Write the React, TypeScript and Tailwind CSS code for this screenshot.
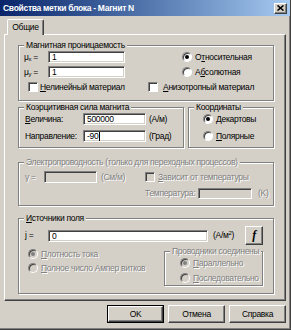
import React from "react";

const font = { fontFamily: '"Liberation Sans", Arial, sans-serif' };

const sunken =
  "border border-t-[#808080] border-l-[#808080] border-b-white border-r-white shadow-[inset_1px_1px_0_#404040,inset_-1px_-1px_0_#D4D0C8]";
const raised =
  "border border-t-white border-l-white border-b-[#404040] border-r-[#404040] shadow-[inset_-1px_-1px_0_#808080]";
const dis = "text-[#808080] [text-shadow:1px_1px_0_#fff]";

function U({ children }: { children: React.ReactNode }) {
  return <span className="underline decoration-1 underline-offset-[1px]">{children}</span>;
}

function Group({
  label,
  disabled,
  className,
  children,
}: {
  label: React.ReactNode;
  disabled?: boolean;
  className: string;
  children?: React.ReactNode;
}) {
  return (
    <div
      className={`relative border border-[#808080] shadow-[inset_1px_1px_0_#fff,1px_1px_0_#fff] ${className}`}
    >
      <span
        className={`absolute -top-[6px] left-[5px] bg-[#D4D0C8] px-[2px] leading-[11px] whitespace-nowrap ${
          disabled ? dis : ""
        }`}
      >
        {label}
      </span>
      {children}
    </div>
  );
}

function Radio({ checked, disabled }: { checked?: boolean; disabled?: boolean }) {
  return (
    <div
      className={`w-[10px] h-[10px] shrink-0 rounded-full border border-t-[#808080] border-l-[#808080] border-b-white border-r-white shadow-[inset_1px_1px_0_#404040] flex items-center justify-center ${
        disabled ? "bg-[#D4D0C8]" : "bg-white"
      }`}
    >
      {checked && (
        <div className={`w-[4px] h-[4px] rounded-full ${disabled ? "bg-[#808080]" : "bg-black"}`} />
      )}
    </div>
  );
}

function Check({ disabled }: { disabled?: boolean }) {
  return (
    <div
      className={`w-[10px] h-[10px] shrink-0 border border-t-[#808080] border-l-[#808080] border-b-white border-r-white shadow-[inset_1px_1px_0_#404040] ${
        disabled ? "bg-[#D4D0C8]" : "bg-white"
      }`}
    />
  );
}

function Field({
  w,
  h,
  children,
  disabled,
}: {
  w: string;
  h: string;
  children?: React.ReactNode;
  disabled?: boolean;
}) {
  return (
    <div
      className={`${w} ${h} ${sunken} ${disabled ? "bg-[#D4D0C8]" : "bg-white"} shrink-0 flex items-center pl-[3px] leading-[10px]`}
    >
      {children}
    </div>
  );
}

function Btn({ children, def }: { children: React.ReactNode; def?: boolean }) {
  return (
    <div
      className={`w-[57px] h-[18px] flex items-center justify-center ${
        def ? "border border-black" : ""
      }`}
    >
      <div className={`w-full h-full ${raised} flex items-center justify-center`}>{children}</div>
    </div>
  );
}

export default function App() {
  return (
    <div
      style={font}
      className="w-[291px] h-[330px] bg-[#D4D0C8] text-[8.5px] tracking-[-0.3px] leading-[11px] text-black flex flex-col border-r border-b border-r-[#404040] border-b-[#404040] shadow-[inset_-1px_-1px_0_#808080] overflow-hidden"
    >
      {/* Title bar */}
      <div className="h-[16px] shrink-0 flex items-center justify-between pl-[3px] pr-[3px] bg-linear-to-r from-[#0A246A] to-[#A6CAF0]">
        <span className="text-white font-bold text-[8.5px] whitespace-nowrap">
          Свойства метки блока - Магнит N
        </span>
        <div className={`w-[13px] h-[11px] bg-[#D4D0C8] ${raised} flex items-center justify-center`}>
          <svg width="7" height="6" viewBox="0 0 7 6">
            <path d="M0.5 0.5 L6.5 5.5 M6.5 0.5 L0.5 5.5" stroke="#000" strokeWidth="1.6" />
          </svg>
        </div>
      </div>

      {/* Tab row */}
      <div className="pl-[7px] mt-[3px] flex relative z-10">
        <div className="w-[37px] h-[16px] -mb-[1px] bg-[#D4D0C8] border-t border-l border-t-white border-l-white border-r border-r-[#404040] shadow-[inset_-1px_0_0_#808080] rounded-t-[2px] flex items-center justify-center pb-[1px]">
          Общие
        </div>
      </div>

      {/* Panel */}
      <div
        className={`ml-[4px] w-[282px] h-[267px] shrink-0 ${raised} pl-[13px] pt-[10px] flex flex-col`}
      >
        {/* Group 1 */}
        <Group label="Магнитная проницаемость" className="w-[256px] h-[56px] shrink-0">
          <div className="pl-[5px] pt-[5px] flex flex-col">
            <div className="flex items-center h-[12px]">
              <span className="w-[24px]">
                μ<sub className="text-[6px]">x</sub> =
              </span>
              <Field w="w-[77px]" h="h-[12px]">1</Field>
              <div className="ml-[57px] flex items-center">
                <Radio checked />
                <span className="ml-[3px]">
                  О<U>т</U>носительная
                </span>
              </div>
            </div>
            <div className="flex items-center h-[12px] mt-[3px]">
              <span className="w-[24px]">
                μ<sub className="text-[6px]">y</sub> =
              </span>
              <Field w="w-[77px]" h="h-[12px]">1</Field>
              <div className="ml-[57px] flex items-center">
                <Radio />
                <span className="ml-[3px]">
                  А<U>б</U>солютная
                </span>
              </div>
            </div>
            <div className="flex items-center h-[10px] mt-[4px]">
              <div className="w-[124px] flex items-center pl-[4px]">
                <Check />
                <span className="ml-[2px]">
                  <U>Н</U>елинейный материал
                </span>
              </div>
              <Check />
              <span className="ml-[5px]">
                <U>А</U>низотропный материал
              </span>
            </div>
          </div>
        </Group>

        {/* Row 2 */}
        <div className="flex mt-[6px] gap-[4px]">
          <Group label="Коэрцитивная сила магнита" className="w-[166px] h-[41px]">
            <div className="pl-[6px] pt-[5px] flex flex-col">
              <div className="flex items-center h-[12px]">
                <span className="w-[58px]">
                  <U>В</U>еличина:
                </span>
                <Field w="w-[63px]" h="h-[12px]">500000</Field>
                <span className="ml-[3px]">(А/м)</span>
              </div>
              <div className="flex items-center h-[12px] mt-[5px]">
                <span className="w-[58px]">
                  Направление:
                </span>
                <Field w="w-[63px]" h="h-[12px]">
                  -90
                  <span className="inline-block w-[1px] h-[9px] bg-black ml-[1px]" />
                </Field>
                <span className="ml-[3px]">(Град)</span>
              </div>
            </div>
          </Group>
          <Group label="Координаты" className="w-[86px] h-[41px]">
            <div className="pl-[14px] pt-[6px] flex flex-col">
              <div className="flex items-center h-[10px]">
                <Radio checked />
                <span className="ml-[3px]">
                  <U>Д</U>екартовы
                </span>
              </div>
              <div className="flex items-center h-[10px] mt-[7px]">
                <Radio />
                <span className="ml-[3px]">
                  <U>П</U>олярные
                </span>
              </div>
            </div>
          </Group>
        </div>

        {/* Group 3 */}
        <Group
          label="Электропроводность (только для переходных процессов)"
          disabled
          className="w-[256px] h-[44px] shrink-0 mt-[14px]"
        >
          <div className={`pl-[6px] pt-[8px] flex flex-col ${dis}`}>
            <div className="flex items-center h-[12px]">
              <div className="w-[120px] flex items-center">
                <span className="w-[19px]">γ =</span>
                <Field w="w-[53px]" h="h-[12px]" disabled />
                <span className="ml-[4px]">(См/м)</span>
              </div>
              <Check disabled />
              <span className="ml-[3px]">
                <U>З</U>ависит от температуры
              </span>
            </div>
            <div className="flex items-center h-[11px] mt-[5px]">
              <span className="ml-[120px] w-[50px] text-right whitespace-nowrap">Температура:</span>
              <div className="ml-[3px]">
                <Field w="w-[54px]" h="h-[11px]" disabled />
              </div>
              <span className="ml-[6px]">(K)</span>
            </div>
          </div>
        </Group>

        {/* Group 4 */}
        <Group
          label={
            <>
              <U>И</U>сточники поля
            </>
          }
          className="w-[256px] h-[76px] shrink-0 mt-[12px]"
        >
          <div className="pl-[6px] pt-[7px] flex flex-col">
            <div className="flex items-center h-[19px]">
              <span className="w-[23px]">j =</span>
              <Field w="w-[160px]" h="h-[12px]">0</Field>
              <span className="ml-[5px] w-[32px]">
                (А/м<sup className="text-[6px]">2</sup>)
              </span>
              <div className={`w-[18px] h-[19px] ${raised} flex items-center justify-center`}>
                <span className="font-bold italic text-[12px]" style={{ fontFamily: '"Liberation Serif", serif' }}>
                  f
                </span>
              </div>
            </div>
            <div className="flex items-start">
              <div className={`w-[139px] pl-[3px] mt-[4px] flex flex-col ${dis}`}>
                <div className="flex items-center h-[10px]">
                  <Radio checked disabled />
                  <span className="ml-[3px]">
                    <U>П</U>лотность тока
                  </span>
                </div>
                <div className="flex items-center h-[10px] mt-[4px]">
                  <Radio disabled />
                  <span className="ml-[3px] whitespace-nowrap">
                    <U>П</U>олное число Ампер витков
                  </span>
                </div>
              </div>
              <Group
                label="Проводники соединены"
                disabled
                className="w-[99px] h-[35px] mt-[6px]"
              >
                <div className={`pl-[15px] pt-[6px] flex flex-col ${dis}`}>
                  <div className="flex items-center h-[10px]">
                    <Radio checked disabled />
                    <span className="ml-[3px]">
                      <U>П</U>араллельно
                    </span>
                  </div>
                  <div className="flex items-center h-[10px] mt-[5px]">
                    <Radio disabled />
                    <span className="ml-[3px]">
                      <U>П</U>оследовательно
                    </span>
                  </div>
                </div>
              </Group>
            </div>
          </div>
        </Group>
      </div>

      {/* Buttons */}
      <div className="flex mt-[4px] pl-[107px] gap-[4px]">
        <Btn def>OK</Btn>
        <Btn>Отмена</Btn>
        <Btn>Справка</Btn>
      </div>
    </div>
  );
}
